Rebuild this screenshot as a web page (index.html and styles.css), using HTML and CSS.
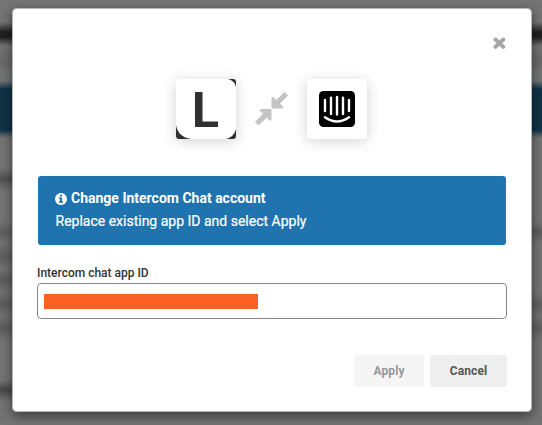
FILE: index.html
```html
<!DOCTYPE html>
<html lang="en">
<head>
  <meta charset="UTF-8" />
  <meta name="viewport" content="width=device-width, initial-scale=1.0" />
  <title>Change Intercom Chat account</title>
  <link rel="stylesheet" href="styles.css">
</head>
<body>
  <div class="modal" role="dialog">
    <header class="modal-header">
      <button class="close" aria-label="Close">
        <svg width="13" height="13" viewBox="0 0 13 13"><path d="M2.500 2.500l7.800 7.400M10.300 2.500L2.500 9.900" stroke="#a6a6a6" stroke-width="4" stroke-linecap="round" /></svg>
      </button>
    </header>

    <div class="logos">
      <div class="logo">
        <svg width="60" height="60" viewBox="0 0 60 60">
          <path fill="#303030" d="M52 0h8v8q-1-6-8-8zM0 46q2 12 15 14H0zM60 50v10H50q8-2 10-10z" />
          <path fill="#303030" d="M19 13h7.500v29.500H42V48H19z" />
        </svg>
      </div>
      <svg class="arrows" width="35" height="36" viewBox="2 2 35 36">
        <g fill="#c4c4c4" stroke="#c4c4c4" stroke-linejoin="round">
          <path d="M20 9l1-.6 3.300 3 8.200-7.900 3 3-8 8.200 3.500 3.500-.7.800H20z" />
          <path d="M19 31l-1 .4-3.300-3.200-8.200 7.700-3-3 8-8L8 21.300l.7-.8H19z" />
        </g>
      </svg>
      <div class="logo">
        <svg width="36" height="36" viewBox="0 0 36 36">
          <rect width="36" height="36" rx="4.500" />
          <g fill="none" stroke="#fff" stroke-width="2.400" stroke-linecap="round">
            <path d="M6 9v11M12 6.600v16.300M18 6v17.500M24 6.600v16.300M30 9v11" />
            <path d="M6 26.300q12 8.400 24 0" />
          </g>
        </svg>
      </div>
    </div>

    <div class="alert">
      <strong>
        <svg class="info" width="12" height="12" viewBox="0 0 12 12">
          <circle cx="6" cy="6" r="6" fill="#fff" />
          <path fill="#1f73ae" d="M5 1.700h2v1.700H5zM4 4.500h3v3.800h1v1.500H4V8.300h1V6H4z" />
        </svg>
        Change Intercom Chat account
      </strong>
      <p>Replace existing app ID and select Apply</p>
    </div>

    <label class="label" for="appId">Intercom chat app ID</label>
    <div class="field" id="appId">
      <span class="masked"></span>
    </div>

    <footer class="actions">
      <button class="btn apply" disabled>Apply</button>
      <button class="btn">Cancel</button>
    </footer>
  </div>
</body>
</html>
```

FILE: styles.css
```css
* {
  box-sizing: border-box;
  margin: 0;
  padding: 0;
}

body {
  font-family: Roboto, "Liberation Sans", sans-serif;
  height: 425px;
  padding: 8px 10px 13px 12px;
  overflow: hidden;
  /* dimmed page behind the dialog, left and right halves */
  background:
    linear-gradient(#757575 22px, #202020 32px, #202020 37px, #737373 46px, #686868 62px, #747474 72px, #707475 81px, #103347 89px, #103347 130px, #747474 138px, #747474 168px, #505050 179px, #747474 190px, #747474 222px, #606060 232px, #717171 243px, #606060 257px, #717171 269px, #5c5c5c 280px, #717171 292px, #5c5c5c 304px, #717171 316px, #5c5c5c 328px, #747474 340px, #747474 380px, #484848 390px, #747474 402px) left / 50% 425px no-repeat,
    linear-gradient(#757575 22px, #202020 32px, #202020 37px, #737373 46px, #686868 62px, #747474 72px, #707475 81px, #103347 89px, #103347 130px, #747474 138px, #747474 222px, #5c5c5c 232px, #747474 243px, #747474 293px, #606060 304px, #717171 316px, #606060 328px, #747474 340px) right / 50% 425px no-repeat;
}

.modal {
  height: 404px;
  padding: 27px 24px 24px;
  background: #fff;
  background-clip: padding-box;
  border: 1px solid #b5b7b7;
  border-radius: 4px;
  box-shadow: 0 4px 12px rgba(0, 0, 0, 0.5);
}

.modal-header {
  display: flex;
  justify-content: flex-end;
  height: 43px;
}

.close {
  width: 14px;
  height: 14px;
  background: none;
  border: none;
}

.close svg {
  display: block;
}

.logos {
  display: flex;
  justify-content: center;
  align-items: center;
  gap: 18px;
  height: 60px;
  padding-right: 1px;
}

.logo {
  display: flex;
  align-items: center;
  justify-content: center;
  width: 60px;
  height: 60px;
  background: #fff;
  border-radius: 3px;
  box-shadow: 0 2px 14px rgba(0, 0, 0, 0.18);
  overflow: hidden;
}

.arrows {
  width: 35px;
}

.alert {
  height: 69px;
  margin: 37px 1px 0;
  padding: 11px 17px;
  background: #1f73ae;
  border-radius: 3px;
  color: #fff;
  font-size: 14px;
  line-height: 23px;
}

.alert strong {
  display: flex;
  align-items: center;
  gap: 4px;
  font-weight: 700;
}

.alert p {
  padding-left: 0.5px;
  -webkit-text-stroke: 0.2px #fff;
}

.label {
  display: block;
  margin-top: 20px;
  color: #333;
  font-size: 12px;
  font-weight: 500;
  line-height: 16px;
}

.field {
  display: flex;
  align-items: center;
  height: 36px;
  margin-top: 2px;
  padding-left: 5.5px;
  border: 1px solid #888;
  border-radius: 4px;
}

.masked {
  width: 214px;
  height: 15px;
  background: #fb6024;
}

.actions {
  display: flex;
  justify-content: flex-end;
  gap: 6px;
  margin-top: 36px;
}

.btn {
  width: 77px;
  height: 32px;
  background: #efefef;
  border: none;
  border-radius: 3px;
  color: #555;
  font-family: inherit;
  font-size: 12px;
  font-weight: 700;
  letter-spacing: 0.1px;
}

.btn.apply {
  width: 70px;
  background: #f5f5f5;
  color: #999;
}
```
